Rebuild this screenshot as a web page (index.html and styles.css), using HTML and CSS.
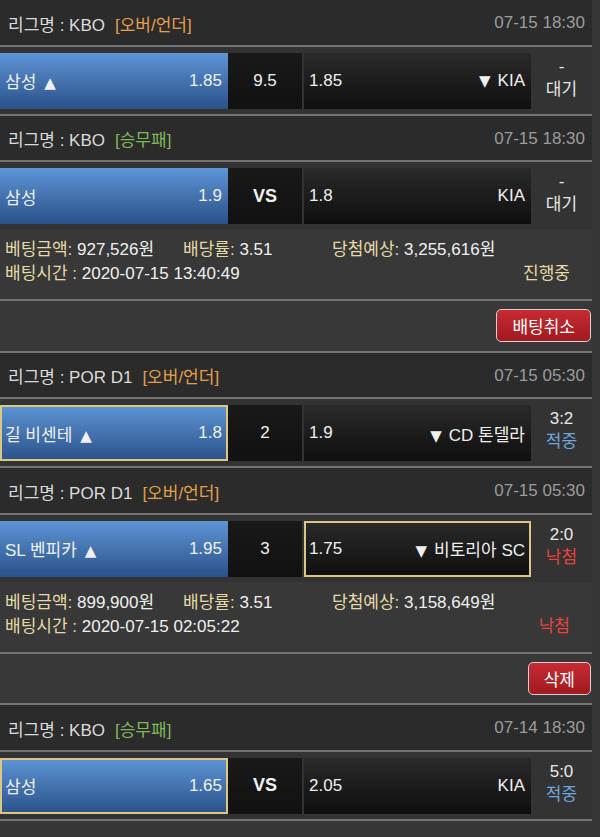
FILE: index.html
```html
<!DOCTYPE html>
<html lang="ko">
<head>
<meta charset="utf-8">
<title>배팅내역</title>
<link rel="stylesheet" href="styles.css">
</head>
<body>
<div class="list">
  <section class="bet">
    <div class="league"><span>리그명 : KBO</span><span class="type ou">[오버/언더]</span><span class="time">07-15 18:30</span></div>
    <div class="match">
      <div class="pick home"><span>삼성<span class="arr up">▲</span></span><span>1.85</span></div>
      <div class="line">9.5</div>
      <div class="pick away"><span>1.85</span><span><span class="arr down">▼</span>KIA</span></div>
      <div class="status"><span>-</span><span>대기</span></div>
    </div>
    <div class="league"><span>리그명 : KBO</span><span class="type wdl">[승무패]</span><span class="time">07-15 18:30</span></div>
    <div class="match open">
      <div class="pick home"><span>삼성</span><span>1.9</span></div>
      <div class="line vs">VS</div>
      <div class="pick away"><span>1.8</span><span>KIA</span></div>
      <div class="status"><span>-</span><span>대기</span></div>
    </div>
    <div class="detail">
      <div class="drow">
        <span class="c1"><span class="lbl">베팅금액:</span> 927,526원</span>
        <span class="c2"><span class="lbl">배당률:</span> 3.51</span>
        <span><span class="lbl">당첨예상:</span> 3,255,616원</span>
      </div>
      <div class="drow split">
        <span><span class="lbl">배팅시간 :</span> 2020-07-15 13:40:49</span>
        <span class="progress">진행중</span>
      </div>
    </div>
    <div class="actions"><button class="btn" type="button">배팅취소</button></div>
  </section>

  <section class="bet">
    <div class="league"><span>리그명 : POR D1</span><span class="type ou">[오버/언더]</span><span class="time">07-15 05:30</span></div>
    <div class="match">
      <div class="pick home chosen"><span>길 비센테<span class="arr up">▲</span></span><span>1.8</span></div>
      <div class="line">2</div>
      <div class="pick away"><span>1.9</span><span><span class="arr down">▼</span>CD 톤델라</span></div>
      <div class="status"><span>3:2</span><span class="hit">적중</span></div>
    </div>
    <div class="league"><span>리그명 : POR D1</span><span class="type ou">[오버/언더]</span><span class="time">07-15 05:30</span></div>
    <div class="match open">
      <div class="pick home"><span>SL 벤피카<span class="arr up">▲</span></span><span>1.95</span></div>
      <div class="line">3</div>
      <div class="pick away chosen"><span>1.75</span><span><span class="arr down">▼</span>비토리아 SC</span></div>
      <div class="status"><span>2:0</span><span class="miss">낙첨</span></div>
    </div>
    <div class="detail">
      <div class="drow">
        <span class="c1"><span class="lbl">베팅금액:</span> 899,900원</span>
        <span class="c2"><span class="lbl">배당률:</span> 3.51</span>
        <span><span class="lbl">당첨예상:</span> 3,158,649원</span>
      </div>
      <div class="drow split">
        <span><span class="lbl">배팅시간 :</span> 2020-07-15 02:05:22</span>
        <span class="miss">낙첨</span>
      </div>
    </div>
    <div class="actions"><button class="btn" type="button">삭제</button></div>
  </section>

  <section class="bet">
    <div class="league"><span>리그명 : KBO</span><span class="type wdl">[승무패]</span><span class="time">07-14 18:30</span></div>
    <div class="match">
      <div class="pick home chosen"><span>삼성</span><span>1.65</span></div>
      <div class="line vs">VS</div>
      <div class="pick away"><span>2.05</span><span>KIA</span></div>
      <div class="status"><span>5:0</span><span class="hit">적중</span></div>
    </div>
  </section>
</div>
</body>
</html>
```

FILE: styles.css
```css
* {
  box-sizing: border-box;
}

body {
  margin: 0;
  background: #363636;
  font-family: "Liberation Sans", "Noto Sans CJK KR", sans-serif;
  font-size: 17px;
  color: #f0f0f0;
}

.list {
  width: 592px;
}

.league {
  height: 46.5px;
  display: flex;
  align-items: center;
  padding: 2px 7px 0 8px;
  background: #2b2b2b;
  border-bottom: 2px solid #747474;
  color: #dcdcdc;
}

.league .type {
  margin-left: 10px;
}

.ou {
  color: #e3a04c;
}

.wdl {
  color: #80b85c;
}

.time {
  margin-left: auto;
  color: #9c9c9c;
}

.match {
  display: flex;
  height: 69px;
  padding: 6px 0 5px;
  background: #333333;
  border-bottom: 2px solid #747474;
}

.match.open {
  height: 67px;
  border-bottom: 0;
}

.pick {
  display: flex;
  align-items: center;
  justify-content: space-between;
  padding: 0 6px 0 5px;
}

.arr {
  font-family: "DejaVu Sans", sans-serif;
  font-size: 15px;
}

.arr.up {
  margin-left: 8px;
}

.arr.down {
  margin-right: 7px;
}

.home {
  width: 228px;
  background: linear-gradient(#5d95d5, #2a5189);
}

.away {
  width: 227px;
  background: linear-gradient(#2a2a2a, #0e0e0e);
}

.chosen {
  box-shadow: inset 0 0 0 2px #dcc684;
}

.line {
  width: 74px;
  margin-right: 2px;
  display: flex;
  align-items: center;
  justify-content: center;
  background: linear-gradient(#191919, #111111);
}

.line.vs {
  font-weight: bold;
  font-size: 18px;
}

.status {
  flex: 1;
  display: flex;
  flex-direction: column;
  align-items: center;
  justify-content: center;
  line-height: 23px;
  padding-bottom: 6px;
  color: #e8e8e8;
}

.hit {
  color: #6fa7de;
}

.miss {
  color: #e2443f;
}

.detail {
  height: 72px;
  padding: 9px 0 0 5px;
  background: #383838;
  border-bottom: 2px solid #747474;
  line-height: 24px;
}

.drow {
  display: flex;
}

.c1 {
  width: 178px;
}

.c2 {
  width: 149px;
}

.lbl {
  color: #e6dba6;
}

.split {
  justify-content: space-between;
  padding-right: 22px;
}

.progress {
  color: #e6dba6;
}

.actions {
  height: 51.5px;
  display: flex;
  align-items: center;
  justify-content: flex-end;
  padding-right: 1px;
  background: #383838;
  border-bottom: 2px solid #747474;
}

.btn {
  height: 33px;
  padding: 0 15px;
  border: 1.5px solid #d2d2d2;
  border-radius: 5px;
  background: linear-gradient(#c72b31, #a01a20);
  color: #ffffff;
  font-family: "Liberation Sans", "Noto Sans CJK KR", sans-serif;
  font-size: 17px;
}
```
